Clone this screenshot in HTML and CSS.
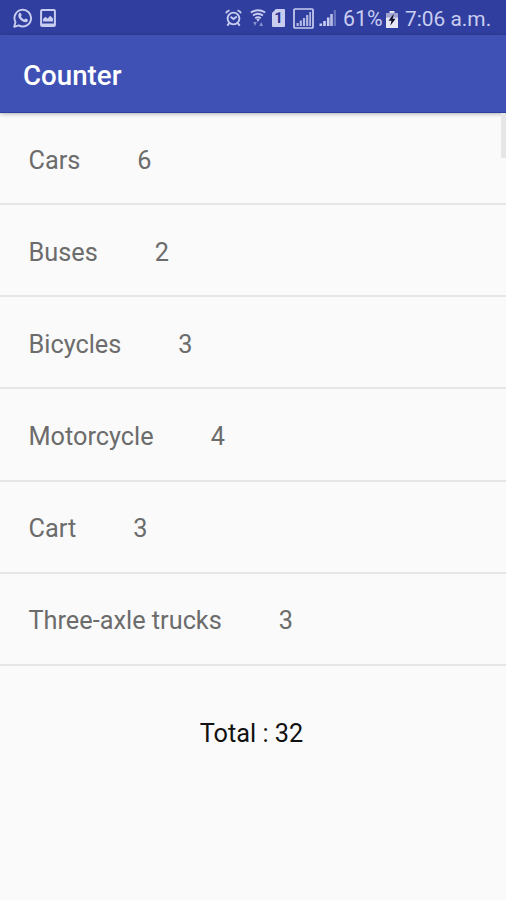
FILE: index.html
```html
<!DOCTYPE html>
<html lang="en">
<head>
	<meta charset="UTF-8">
	<title>Counter</title>
	<link rel="stylesheet" href="styles.css">
</head>
<body>
	<div class="status-bar">
		<!-- Notifications -->
		<svg class="whatsapp" width="20" height="20" viewBox="0 0 20 20">
			<path d="M1.2 18.8l1.3-4.7a8.3 8.3 0 1 1 3.3 3.3z" fill="none" stroke="currentColor" stroke-width="1.9" stroke-linejoin="round"/>
			<path d="M6.1 5.2c.8-.8 1.5-.6 1.8.1l.7 1.6c.2.6-.8 1.3-.6 1.7.7 1.4 1.8 2.4 3.2 3 .5.1 1.1-1.3 1.7-1l1.8.9c.6.3.1 2-.9 2.5-1.7.9-4.6-.3-6.6-2.4C5.3 9.6 4.5 6.9 6.1 5.2z" fill="currentColor"/>
		</svg>
		<svg class="picture" width="16" height="18" viewBox="0 0 16 18">
			<rect x="1.1" y="1.1" width="13.8" height="15.8" rx="1" fill="none" stroke="currentColor" stroke-width="2"/>
			<path d="M3 12.5V10l2.5-2.2 2 1.7 2.8-2.7L13 9.5v3zM1 14.5h14V17H1z" fill="currentColor"/>
		</svg>

		<!-- System icons -->
		<svg class="alarm" width="17" height="18" viewBox="0 0 17 18">
			<g fill="none" stroke="currentColor" stroke-width="1.9">
				<circle cx="8.5" cy="9.5" r="5.9"/>
				<path d="M1 4.3Q1.8 2 4.5 1.4M16 4.3Q15.2 2 12.5 1.4M4.3 14.2l-2 2.5M12.7 14.2l2 2.5M5.6 7.7l2.9 2.3 3.3-2.4"/>
			</g>
		</svg>
		<svg class="wifi" width="16" height="18" viewBox="0 0 16 18">
			<g fill="none" stroke="currentColor" stroke-width="1.9">
				<path d="M.8 3.5q7.2-4.4 14.4 0M3 6.5q5-3.4 10 0M5.2 9.3q2.8-2 5.6 0"/>
			</g>
			<path d="M6.3 10h3.4L8 13z" fill="currentColor"/>
			<path d="M3.2 13h3.6L5 17zM9.4 17l1.8-4 1.8 4z" fill="currentColor" opacity=".6"/>
		</svg>
		<span class="sim">1</span>
		<svg class="signal-box" width="21" height="21" viewBox="0 0 21 21">
			<rect x="1" y="1" width="19" height="19" rx="1" fill="none" stroke="currentColor" stroke-width="1.7"/>
			<path d="M3.5 15h2.2v3H3.5zM6.7 12.5h2.2V18H6.7zM9.9 10h2.2v8H9.9zM13.1 7h2.2v11h-2.2zM16.3 4H18v14h-1.7z" fill="currentColor" opacity=".85"/>
		</svg>
		<svg class="signal" width="18" height="18" viewBox="0 0 18 18">
			<path d="M.5 14.5h2.6V17H.5zM4.2 12h2.6v5H4.2zM7.9 8.5h2.6V17H7.9z" fill="currentColor"/>
			<path d="M11.2 5h2.6v12h-2.6z" fill="currentColor" opacity=".9"/>
			<path d="M14.7 1H17v16h-2.3z" fill="currentColor" opacity=".35"/>
		</svg>
		<span class="percent">61%</span>
		<svg class="battery" width="12" height="17" viewBox="0 0 12 18" preserveAspectRatio="none">
			<path d="M3.5 0h5v2H12v16H0V2h3.5z" fill="currentColor"/>
			<path d="M0 2h12v5H0z" fill="#6f77b8" opacity=".6"/>
			<path d="M7.8 3L2.5 10.3h3L4.3 15.5l5.3-7.2H6.7z" fill="#10122c"/>
		</svg>
		<span class="clock">7:06 a.m.</span>
	</div>

	<h1 class="toolbar">Counter</h1>

	<div class="content">
		<ul class="counters">
			<li><span>Cars</span><span>6</span></li>
			<li><span>Buses</span><span>2</span></li>
			<li><span>Bicycles</span><span>3</span></li>
			<li><span>Motorcycle</span><span>4</span></li>
			<li><span>Cart</span><span>3</span></li>
			<li><span>Three-axle trucks</span><span>3</span></li>
		</ul>
		<div class="scrollbar"></div>
		<p class="total">Total : 32</p>
	</div>
</body>
</html>
```

FILE: styles.css
```css
body {
	margin: 0;
	height: 900px;
	overflow: hidden;
	background: #fafafa;
	color: #6c6c6c;
	font: 25.3px/30px Roboto, sans-serif;
}

.status-bar {
	display: flex;
	align-items: center;
	box-sizing: border-box;
	height: 35px;
	padding: 1px 0 0 13px;
	background: #303f9f;
	color: #c9cdf0;
	white-space: nowrap;
}

.status-bar svg {
	flex: none;
}

.picture {
	margin-left: 7px;
}

.alarm {
	margin-left: 169px;
}

.wifi {
	margin-left: 8px;
}

.sim {
	flex: none;
	width: 13px;
	height: 18px;
	margin-left: 6px;
	border-radius: 1px;
	background: #c9cdf0;
	clip-path: polygon(30% 0, 100% 0, 100% 100%, 0 100%, 0 22%);
	color: #283593;
	font-size: 15px;
	font-weight: 700;
	line-height: 19px;
	text-align: center;
}

.signal-box {
	margin-left: 8px;
}

.signal {
	margin-left: 5px;
}

.percent {
	margin-left: 6px;
	width: 43px;
	padding-top: 2px;
	font-size: 21.3px;
}

.battery {
	margin-top: 2px;
	color: #e8e8f4;
}

.clock {
	margin-left: 7px;
	padding-top: 2px;
	font-size: 20.9px;
}

.toolbar {
	position: relative;
	box-sizing: border-box;
	height: 78px;
	margin: 0;
	padding-left: 23px;
	background: #3f51b5;
	border-bottom: 1px solid #2b40a2;
	box-shadow: 0 1px 4px rgba(0, 0, 0, .3);
	color: #fff;
	font-size: 27.7px;
	font-weight: 500;
	line-height: 81px;
}

.content {
	position: relative;
}

.counters {
	margin: 0;
	padding: 0;
	list-style: none;
}

.counters li {
	display: flex;
	align-items: center;
	gap: 57px;
	box-sizing: border-box;
	height: 92.15px;
	padding: 5px 28.5px 0;
	border-bottom: 2px solid #e6e6e6;
}

/* sits over the list's right edge */
.scrollbar {
	position: absolute;
	top: 0;
	right: 0;
	width: 5px;
	height: 45px;
	background: #e6e6e6;
}

.total {
	margin: 53px 0 0;
	padding-right: 3px;
	color: #111;
	text-align: center;
}
```
